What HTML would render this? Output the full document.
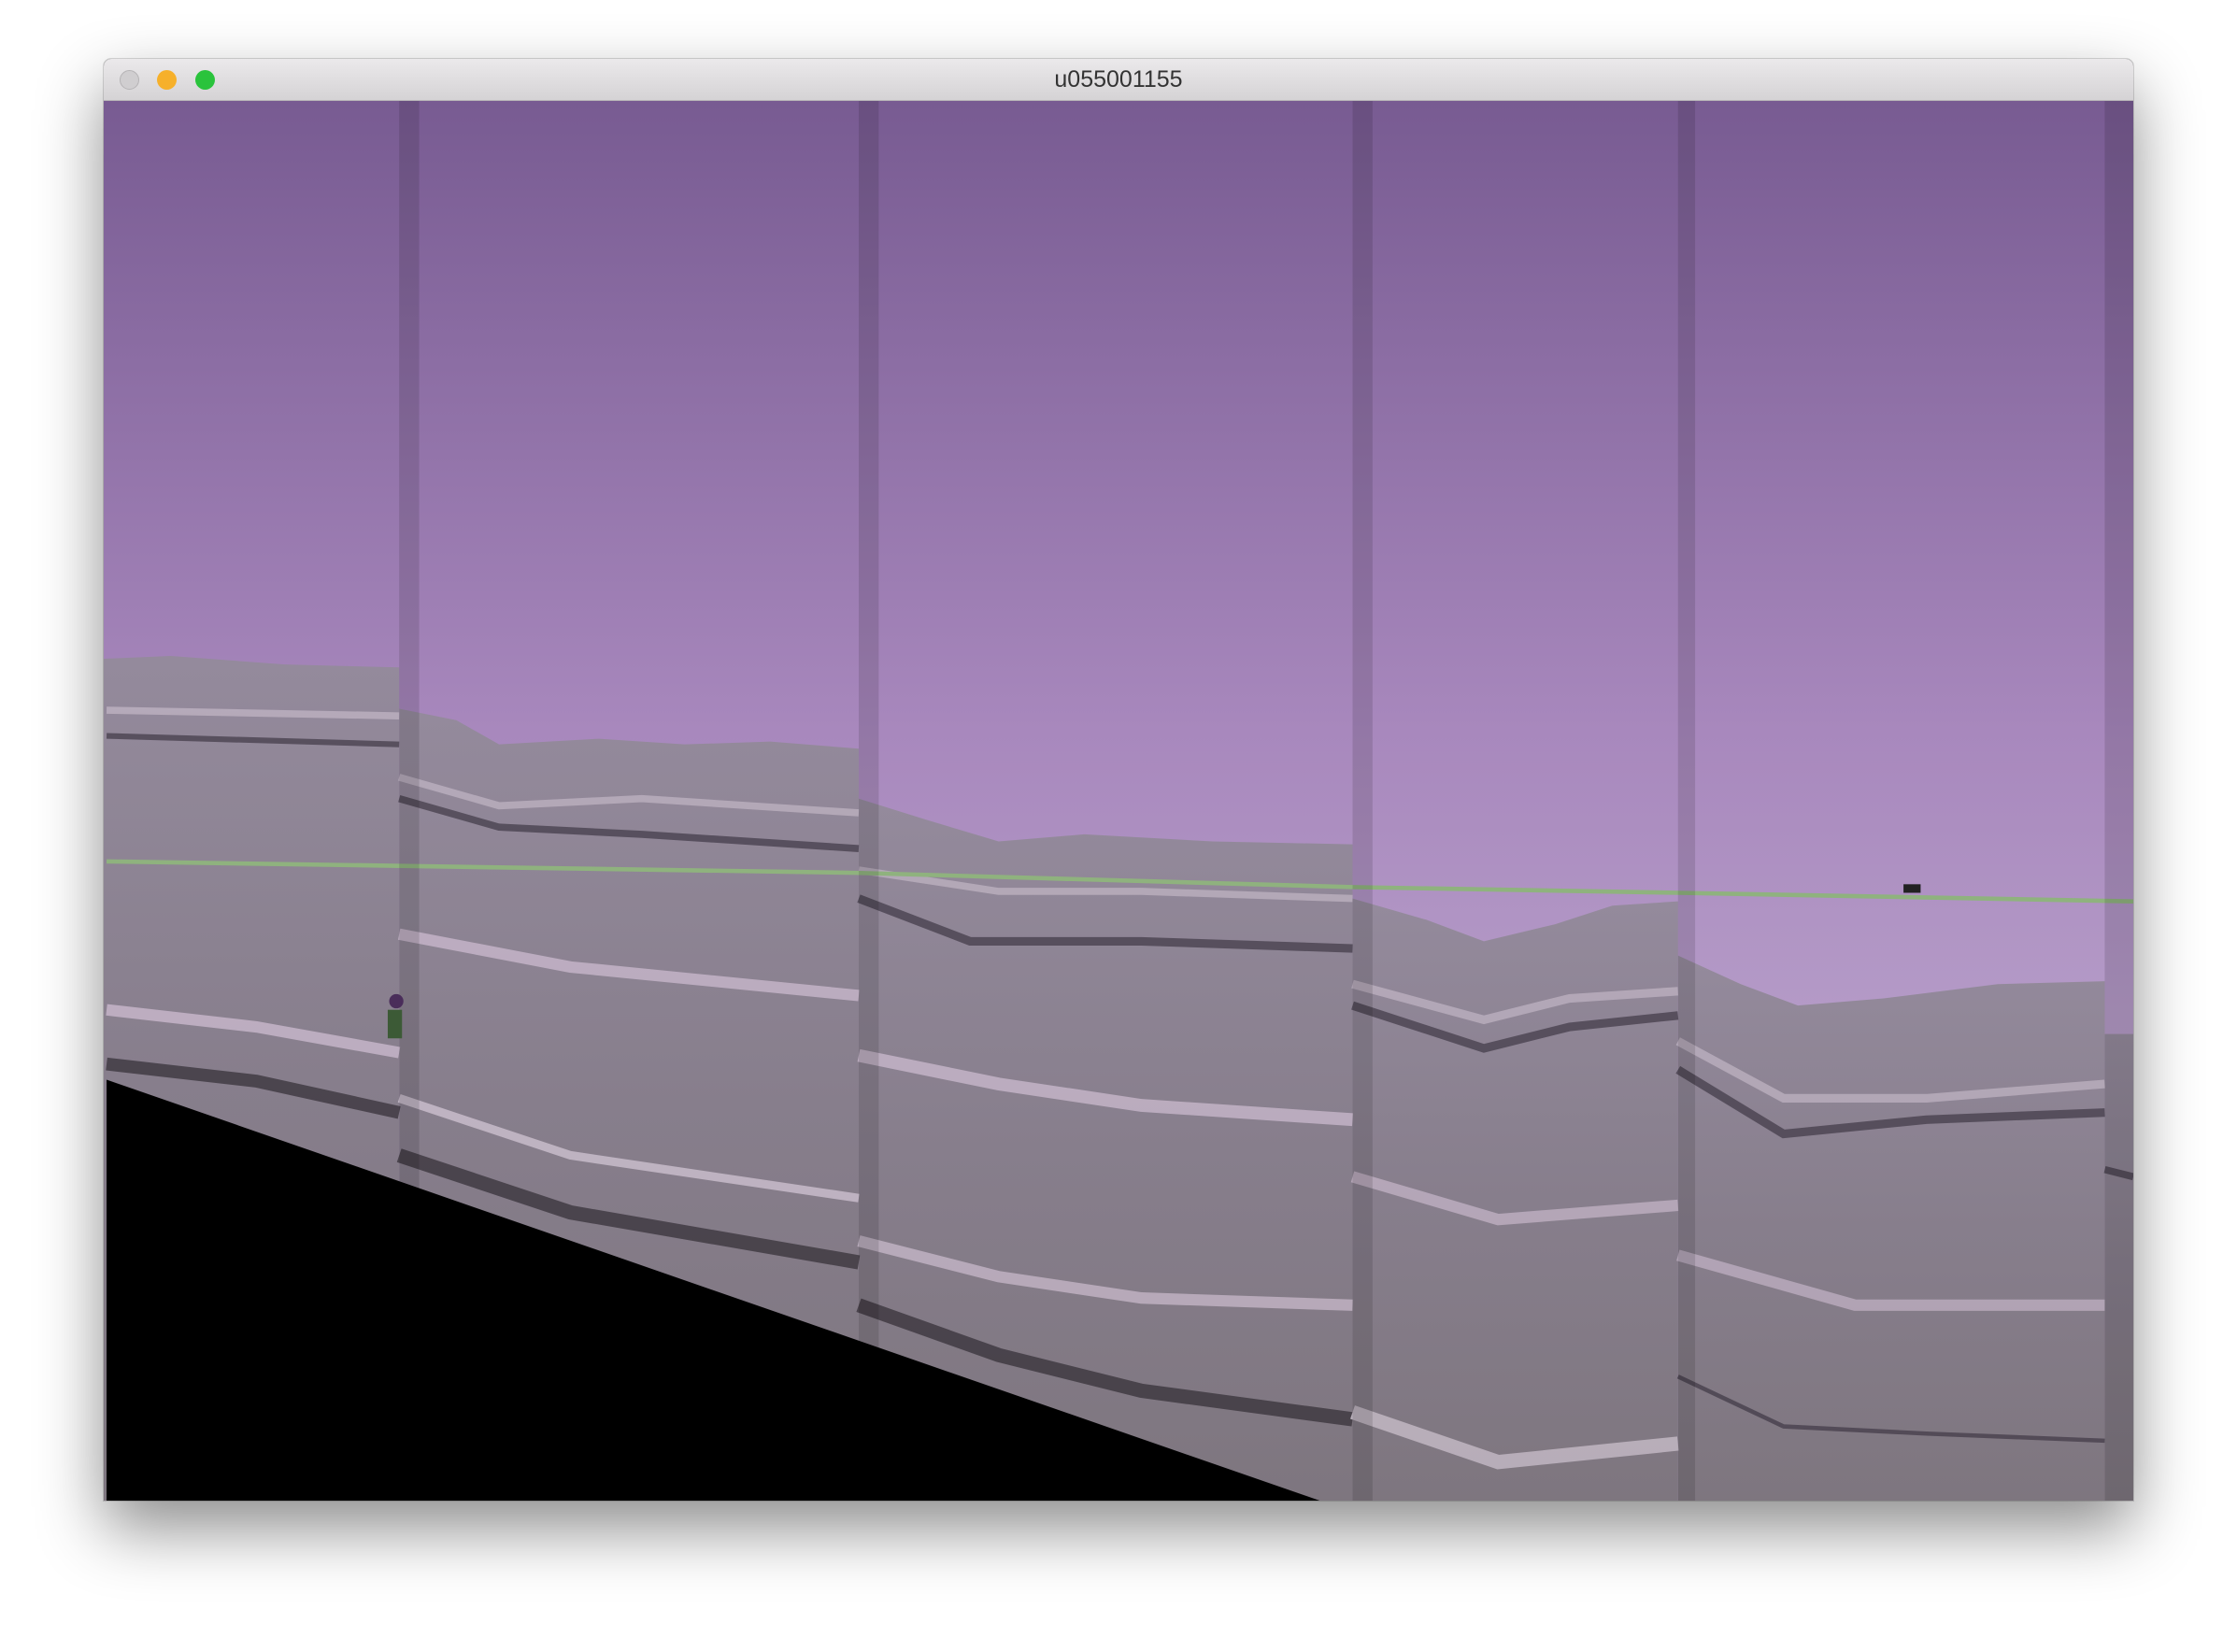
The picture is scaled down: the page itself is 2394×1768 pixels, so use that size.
<!DOCTYPE html>
<html><head><meta charset="utf-8"><style>
html,body{margin:0;padding:0;background:#fff;width:2394px;height:1768px;overflow:hidden}
#win{position:absolute;left:111px;top:63px;width:2172px;height:1543px;box-shadow:0 30px 70px rgba(0,0,0,.45),0 0 0 1px rgba(0,0,0,.15);border-radius:8px 8px 0 0;overflow:hidden;background:#000}
#tb{position:absolute;left:0;top:0;width:100%;height:44px;background:linear-gradient(#ebe9eb,#d5d3d5);border-bottom:1px solid #b9b7b9;font-family:"Liberation Sans",sans-serif;font-size:25px;color:#333;text-align:center;line-height:44px}
.d{position:absolute;top:12px;width:21px;height:21px;border-radius:50%}
svg{position:absolute;left:0;top:45px}
</style></head><body>
<div id="win">
<div id="tb">u055001155
<div class="d" style="left:17px;background:#d0ced0;border:1px solid #b5b3b5;width:19px;height:19px"></div>
<div class="d" style="left:57px;background:#f6b02b"></div>
<div class="d" style="left:98px;background:#2ac33c"></div>
</div>
<svg width="2172" height="1498" viewBox="73 71 1422 981" preserveAspectRatio="none">
<defs>
<linearGradient id="sky" x1="0" y1="0" x2="0" y2="1"><stop offset="0" stop-color="#785b92"/><stop offset=".45" stop-color="#a888bd"/><stop offset=".65" stop-color="#b49ac7"/><stop offset="1" stop-color="#b7a3c8"/></linearGradient>
<linearGradient id="gr" x1="0" y1="0" x2="0" y2="1"><stop offset="0" stop-color="#948a9c"/><stop offset=".5" stop-color="#877e8c"/><stop offset="1" stop-color="#7e767f"/></linearGradient>
</defs>
<rect x="73" y="71" width="1422" height="981" fill="url(#sky)"/>
<g fill="url(#gr)">
<path d="M73 462 L120 460 L200 466 L280 468 L280 1052 L73 1052Z"/>
<path d="M280 497 L320 505 L350 522 L420 518 L480 522 L540 520 L602 525 L602 1052 L280 1052Z"/>
<path d="M602 560 L650 575 L700 590 L760 585 L850 590 L948 592 L948 1052 L602 1052Z"/>
<path d="M948 630 L1000 645 L1040 660 L1090 648 L1130 635 L1176 632 L1176 1052 L948 1052Z"/>
<path d="M1176 670 L1220 690 L1260 705 L1320 700 L1400 690 L1475 688 L1475 1052 L1176 1052Z"/>
<path d="M1475 725 L1495 725 L1495 1052 L1475 1052Z"/>
</g>
<g fill="none" stroke-linecap="butt" opacity=".65">
<path d="M75 498 L280 502" stroke="#c8bccb" stroke-width="5"/>
<path d="M75 516 L280 522" stroke="#3a3340" stroke-width="4"/>
<path d="M75 708 L180 720 L280 738" stroke="#d9c6dc" stroke-width="8"/>
<path d="M75 746 L180 758 L280 780" stroke="#2c272e" stroke-width="9"/>
<path d="M280 545 L350 565 L450 560 L602 570" stroke="#c6bac9" stroke-width="5"/>
<path d="M280 560 L350 580 L450 585 L602 595" stroke="#3a3340" stroke-width="5"/>
<path d="M280 655 L400 678 L602 698" stroke="#d6c3d9" stroke-width="8"/>
<path d="M280 770 L400 810 L602 840" stroke="#ddd0df" stroke-width="6"/>
<path d="M280 810 L400 850 L602 885" stroke="#2c272e" stroke-width="10"/>
<path d="M602 610 L700 625 L800 625 L948 630" stroke="#c6bac9" stroke-width="5"/>
<path d="M602 630 L680 660 L800 660 L948 665" stroke="#3a3340" stroke-width="6"/>
<path d="M602 740 L700 760 L800 775 L948 785" stroke="#d6c3d9" stroke-width="9"/>
<path d="M602 870 L700 895 L800 910 L948 915" stroke="#d3c3d5" stroke-width="8"/>
<path d="M602 915 L700 950 L800 975 L948 995" stroke="#2c272e" stroke-width="10"/>
<path d="M948 690 L1040 715 L1100 700 L1176 695" stroke="#c6bac9" stroke-width="6"/>
<path d="M948 705 L1040 735 L1100 720 L1176 712" stroke="#3a3340" stroke-width="6"/>
<path d="M948 825 L1050 855 L1176 845" stroke="#cdbccf" stroke-width="8"/>
<path d="M948 990 L1050 1025 L1176 1012" stroke="#d6cbd7" stroke-width="10"/>
<path d="M1176 730 L1250 770 L1350 770 L1475 760" stroke="#c6bac9" stroke-width="6"/>
<path d="M1176 750 L1250 795 L1350 785 L1475 780" stroke="#3a3340" stroke-width="6"/>
<path d="M1176 880 L1300 915 L1475 915" stroke="#c9b8cc" stroke-width="8"/>
<path d="M1176 965 L1250 1000 L1350 1005 L1475 1010" stroke="#3a3340" stroke-width="3"/>
<path d="M1475 820 L1495 825" stroke="#3a3340" stroke-width="5"/>
</g>
<path d="M75 604 L600 612 L948 622 L1176 626 L1495 632" stroke="#8fb27e" stroke-width="3" fill="none"/>
<rect x="1334" y="620" width="12" height="6" fill="#222"/>
<g fill="#000" opacity=".12">
<rect x="280" y="71" width="14" height="981"/><rect x="602" y="71" width="14" height="981"/>
<rect x="948" y="71" width="14" height="981"/><rect x="1176" y="71" width="12" height="981"/>
<rect x="1475" y="71" width="20" height="981"/>
</g>
<circle cx="278" cy="702" r="5" fill="#4a2d5a"/>
<rect x="272" y="708" width="10" height="20" fill="#3c5a36"/>
<polygon points="75,757 925,1052 75,1052" fill="#000"/>
</svg>
</div>
</body></html>
